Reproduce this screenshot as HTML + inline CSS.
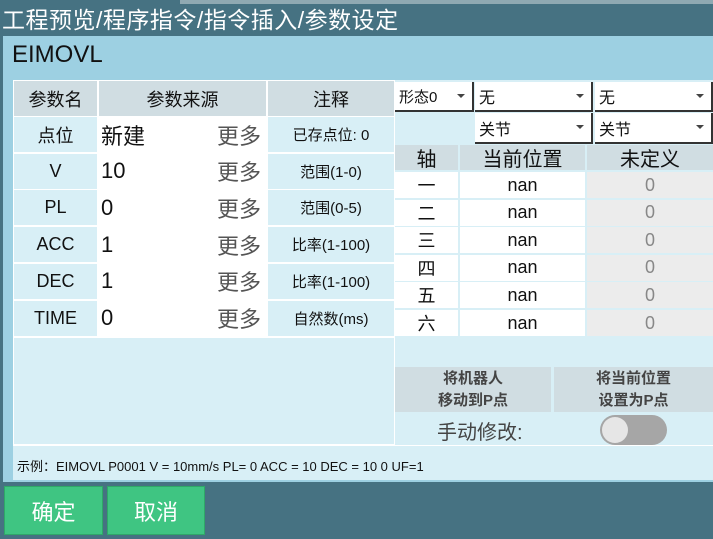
<!DOCTYPE html><html><head><meta charset="utf-8"><style>
*{box-sizing:border-box;margin:0;padding:0}
body{width:713px;height:539px;background:#467282;position:relative;overflow:hidden;font-family:"Liberation Sans","Noto Sans CJK SC",sans-serif;color:#111}
.a{position:absolute}
.c{position:absolute;display:flex;align-items:center;justify-content:center}
.h{background:#d0dde2}.l{background:#d8eff6}.w{background:#fff}
.dd{position:absolute;background:#fff;font-size:16px;padding-left:4px;display:flex;align-items:center;border-right:2px solid #333;border-bottom:2px solid #333}
.dd:after{content:"";position:absolute;right:7px;top:12px;border:4px solid transparent;border-top:4px solid #444}
</style></head><body>
<div class="a" style="left:180px;top:0;width:533px;height:4px;background:#8fa9b2"></div>
<div class="a" style="left:2px;top:6px;color:#fff;font-size:23px;line-height:28px;letter-spacing:0.5px">工程预览/程序指令/指令插入/参数设定</div>
<div class="a" style="left:3px;top:36px;width:710px;height:446px;background:#9dd0e2"></div>
<div class="a" style="left:12px;top:40px;font-size:24px;line-height:30px">EIMOVL</div>
<div class="a l" style="left:13px;top:80px;width:700px;height:400px"></div>
<div class="a" style="left:13px;top:80px;width:382px;height:365px;background:#fff"></div>
<div class="c h" style="left:14px;top:81px;width:83px;height:35px;font-size:18px">参数名</div>
<div class="c h" style="left:99px;top:81px;width:167px;height:35px;font-size:18px">参数来源</div>
<div class="c h" style="left:268px;top:81px;width:126px;height:35px;font-size:18px">注释</div>
<div id="rows"></div>
<div class="a l" style="left:14px;top:338px;width:380px;height:106px"></div>
<div class="a" style="left:13px;top:445px;width:700px;height:1px;background:#fff"></div>
<div class="a" style="left:17px;top:456px;font-size:13px">示例：EIMOVL P0001 V = 10mm/s PL= 0 ACC = 10 DEC = 10 0 UF=1</div>
<div class="dd" style="left:395px;top:82px;width:79px;height:30px;font-size:15px">形态0</div>
<div class="dd" style="left:475px;top:82px;width:118px;height:30px">无</div>
<div class="dd" style="left:595px;top:82px;width:118px;height:30px">无</div>
<div class="a l" style="left:395px;top:113px;width:78px;height:32px"></div>
<div class="dd" style="left:475px;top:113px;width:118px;height:31px">关节</div>
<div class="dd" style="left:595px;top:113px;width:118px;height:31px">关节</div>
<div class="c h" style="left:395px;top:145px;width:63px;height:25px;font-size:20px">轴</div>
<div class="c h" style="left:460px;top:145px;width:125px;height:25px;font-size:20px">当前位置</div>
<div class="c h" style="left:587px;top:145px;width:126px;height:25px;font-size:20px">未定义</div>
<div id="ax"></div>
<div class="c h" style="left:395px;top:367px;width:156px;height:45px;font-size:15px;font-weight:bold;color:#444;line-height:22px;text-align:center">将机器人<br>移动到P点</div>
<div class="c h" style="left:554px;top:367px;width:159px;height:45px;font-size:15px;font-weight:bold;color:#444;line-height:22px;text-align:center">将当前位置<br>设置为P点</div>
<div class="a" style="left:437px;top:416px;font-size:20px;color:#444">手动修改:</div>
<div class="a" style="left:600px;top:415px;width:67px;height:30px;border-radius:15px;background:#a6a6a6"></div>
<div class="a" style="left:602px;top:417px;width:26px;height:26px;border-radius:13px;background:#e6e6e6"></div>
<div class="c" style="left:4px;top:486px;width:99px;height:49px;background:#3fc582;color:#fff;font-size:22px;border:1px solid #2fa868">确定</div>
<div class="c" style="left:107px;top:486px;width:98px;height:49px;background:#3fc582;color:#fff;font-size:22px;border:1px solid #2fa868">取消</div>
<script>
var r=[["点位","新建","已存点位: 0"],["V","10","范围(1-0)"],["PL","0","范围(0-5)"],["ACC","1","比率(1-100)"],["DEC","1","比率(1-100)"],["TIME","0","自然数(ms)"]],h="";
r.forEach(function(x,i){var y=117+i*36.7;
h+='<div class="c l" style="left:14px;top:'+y+'px;width:83px;height:35px;font-size:18px">'+x[0]+'</div>';
h+='<div class="c w" style="left:99px;top:'+y+'px;width:111px;height:35px;font-size:22px;justify-content:flex-start;padding-left:2px">'+x[1]+'</div>';
h+='<div class="c w" style="left:212px;top:'+y+'px;width:54px;height:35px;font-size:22px;color:#555">更多</div>';
h+='<div class="c l" style="left:268px;top:'+y+'px;width:126px;height:35px;font-size:15px">'+x[2]+'</div>';});
document.getElementById("rows").innerHTML=h;
var a=["一","二","三","四","五","六"];h="";
a.forEach(function(x,i){var y=172+i*27.6;
h+='<div class="c w" style="left:395px;top:'+y+'px;width:63px;height:26px;font-size:18px">'+x+'</div>';
h+='<div class="c w" style="left:460px;top:'+y+'px;width:125px;height:26px;font-size:18px">nan</div>';
h+='<div class="c" style="left:587px;top:'+y+'px;width:126px;height:26px;font-size:18px;background:#ececec;color:#888">0</div>';});
document.getElementById("ax").innerHTML=h;
</script>
</body></html>
